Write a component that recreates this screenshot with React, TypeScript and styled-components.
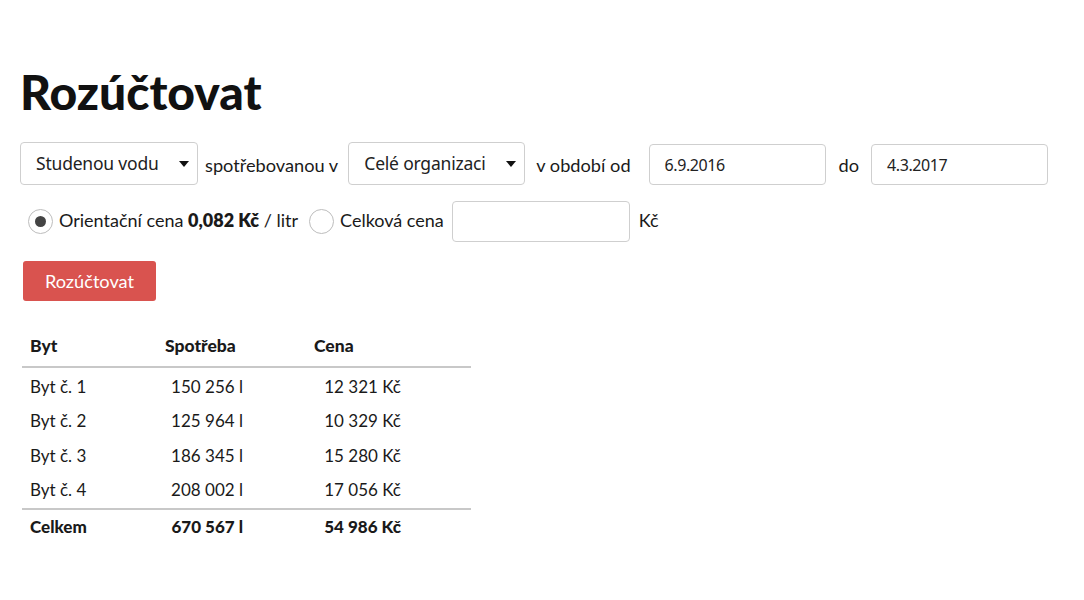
import React from "react";
import styled, { createGlobalStyle } from "styled-components";

const Global = createGlobalStyle`
  html, body { margin: 0; padding: 0; background: #fff; }
  body { font-family: Lato, "Noto Sans", sans-serif; color: #1a1a1a; }
  * { box-sizing: border-box; }
`;

const Page = styled.div`
  padding: 64px 20px 0 20px;
  display: flex;
  flex-direction: column;
  align-items: flex-start;
`;

const Title = styled.h1`
  margin: 0 0 24px 0;
  font-family: Lato, sans-serif;
  font-weight: 900;
  font-size: 48px;
  line-height: 56px;
  color: #111;
`;

const Row = styled.div<{ $mb: number; $ml?: number }>`
  display: flex;
  align-items: center;
  margin-bottom: ${(p) => p.$mb}px;
  margin-left: ${(p) => p.$ml ?? 0}px;
`;

const Label = styled.span<{ $ml?: number; $mr?: number; $size?: number; $lift?: number }>`
  font-size: ${(p) => p.$size ?? 18.2}px;
  color: #1a1a1a;
  margin-left: ${(p) => p.$ml ?? 0}px;
  margin-right: ${(p) => p.$mr ?? 0}px;
  padding-bottom: ${(p) => p.$lift ?? 0}px;
  white-space: nowrap;
  b { font-weight: 800; }
`;

const SelectBox = styled.div<{ $w: number }>`
  width: ${(p) => p.$w}px;
  height: 43px;
  border: 1px solid #cfcfcf;
  border-radius: 4px;
  display: flex;
  align-items: center;
  justify-content: space-between;
  padding: 0 8px 0 15px;
  font-family: "Noto Sans", sans-serif;
  font-size: 17.5px;
  letter-spacing: -0.2px;
  color: #222;
  margin-top: -3px;
`;

const Caret = styled.span`
  width: 0;
  height: 0;
  border-left: 5.5px solid transparent;
  border-right: 5.5px solid transparent;
  border-top: 6px solid #111;
  margin-top: 2px;
`;

const Input = styled.div<{ $w: number }>`
  width: ${(p) => p.$w}px;
  height: 41px;
  border: 1px solid #cfcfcf;
  border-radius: 4px;
  display: flex;
  align-items: center;
  padding: 0 15px;
  font-family: "Noto Sans", sans-serif;
  font-size: 16px;
  letter-spacing: -0.4px;
  color: #222;
`;

const Radio = styled.span<{ $checked?: boolean }>`
  width: 25px;
  height: 25px;
  border-radius: 50%;
  border: 1px solid #bdbdbd;
  display: inline-flex;
  align-items: center;
  justify-content: center;
  margin-right: 6px;
  flex-shrink: 0;
  &::after {
    content: "";
    width: 11px;
    height: 11px;
    border-radius: 50%;
    background: ${(p) => (p.$checked ? "#444" : "transparent")};
  }
`;

const Button = styled.button`
  margin-left: 3px;
  width: 133px;
  height: 40px;
  border: none;
  border-radius: 3px;
  background: #d9534f;
  color: #fff;
  font-family: Lato, sans-serif;
  font-size: 18.2px;
  margin-bottom: 24px;
  padding: 0;
`;

const Table = styled.table`
  margin-left: 2px;
  width: 449px;
  border-collapse: collapse;
  font-size: 17px;
`;

const Th = styled.th<{ $w?: number }>`
  text-align: left;
  font-weight: 900;
  font-size: 17.5px;
  height: 42px;
  padding: 0 8px;
  border-bottom: 2px solid #c8c8c8;
  width: ${(p) => (p.$w ? p.$w + "px" : "auto")};
`;

const Td = styled.td<{ $pr?: number; $right?: boolean; $bold?: boolean }>`
  height: 34.5px;
  padding: 4px ${(p) => p.$pr ?? 8}px 0 8px;
  text-align: ${(p) => (p.$right ? "right" : "left")};
  font-weight: ${(p) => (p.$bold ? 900 : 400)};
`;

const BodyRow = styled.tr`
  &:nth-child(4) td { height: 38.5px; padding-bottom: 4px; }
`;

const TotalRow = styled.tr`
  border-top: 2px solid #c8c8c8;
  td { height: 34px; padding-top: 0; }
`;

const rows = [
  ["Byt č. 1", "150 256 l", "12 321 Kč"],
  ["Byt č. 2", "125 964 l", "10 329 Kč"],
  ["Byt č. 3", "186 345 l", "15 280 Kč"],
  ["Byt č. 4", "208 002 l", "17 056 Kč"],
];

export default function App() {
  return (
    <>
      <Global />
      <Page>
        <Title>Rozúčtovat</Title>
        <Row $mb={16}>
          <SelectBox $w={178}>
            Studenou vodu <Caret />
          </SelectBox>
          <Label $ml={7} $mr={10}>spotřebovanou v</Label>
          <SelectBox $w={177}>
            Celé organizaci <Caret />
          </SelectBox>
          <Label $ml={11} $mr={18}>v období od</Label>
          <Input $w={177}>6.9.2016</Input>
          <Label $ml={13} $mr={12}>do</Label>
          <Input $w={177}>4.3.2017</Input>
        </Row>
        <Row $mb={19} $ml={8}>
          <Radio $checked />
          <Label $mr={11} $size={18} $lift={3}>
            Orientační cena <b>0,082 Kč</b> / litr
          </Label>
          <Radio />
          <Label $mr={8} $size={18} $lift={3}>Celková cena</Label>
          <Input $w={178}></Input>
          <Label $ml={9} $size={18} $lift={3}>Kč</Label>
        </Row>
        <Button>Rozúčtovat</Button>
        <Table>
          <thead>
            <tr>
              <Th $w={135}>Byt</Th>
              <Th $w={149}>Spotřeba</Th>
              <Th>Cena</Th>
            </tr>
          </thead>
          <tbody>
            {rows.map((r) => (
              <BodyRow key={r[0]}>
                <Td>{r[0]}</Td>
                <Td $right $pr={63}>{r[1]}</Td>
                <Td $right $pr={70}>{r[2]}</Td>
              </BodyRow>
            ))}
            <TotalRow>
              <Td $bold>Celkem</Td>
              <Td $bold $right $pr={63}>670 567 l</Td>
              <Td $bold $right $pr={70}>54 986 Kč</Td>
            </TotalRow>
          </tbody>
        </Table>
      </Page>
    </>
  );
}
